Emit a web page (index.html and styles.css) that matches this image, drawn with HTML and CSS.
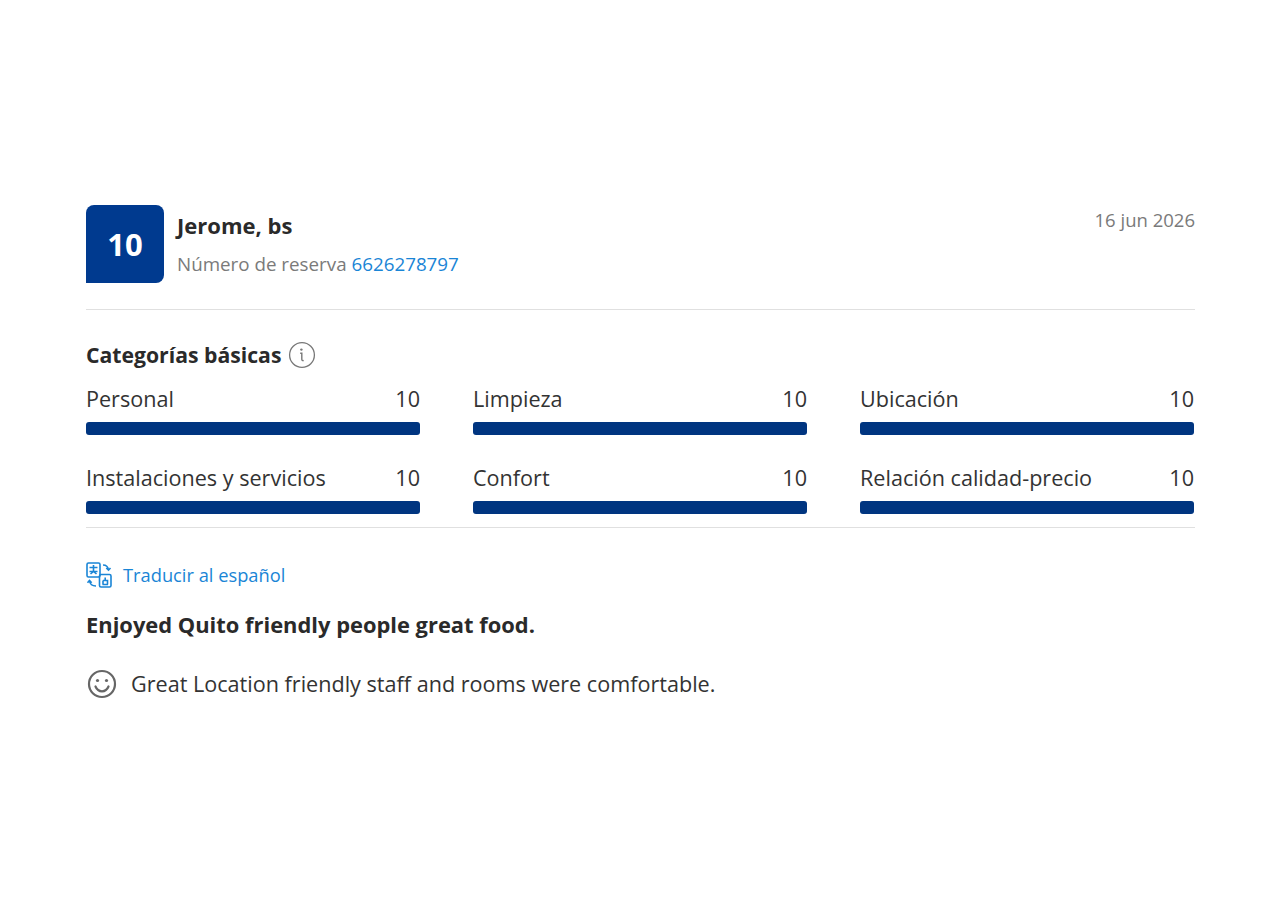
FILE: index.html

```html
<!DOCTYPE html>
<html lang="es">
<head>
  <meta charset="UTF-8">
  <title>Comentario</title>
  <link rel="stylesheet" href="styles.css">
</head>
<body>
  <div class="review">
    <div class="head">
      <div class="score">10</div>
      <div class="who">
        <div class="name">Jerome, bs</div>
        <div class="booking">Número de reserva <a href="#">6626278797</a></div>
      </div>
      <div class="date">16 jun 2026</div>
    </div>

    <div class="cats">
      <h3>Categorías básicas
        <svg class="info" width="28" height="28" viewBox="0 0 28 28" fill="none">
          <circle cx="14" cy="14" r="12.4" stroke="#777" stroke-width="1.3"/>
          <circle cx="13.4" cy="8.6" r="1.2" fill="#777"/>
          <path d="M12.200 12.200h1.600v6c0 1.100.7 1.600 1.900 1.300" stroke="#777" stroke-width="1.400"/>
        </svg>
      </h3>
      <div class="grid">
        <div class="cat"><div class="row"><span>Personal</span><span>10</span></div><div class="bar"></div></div>
        <div class="cat"><div class="row"><span>Limpieza</span><span>10</span></div><div class="bar"></div></div>
        <div class="cat"><div class="row"><span>Ubicación</span><span>10</span></div><div class="bar"></div></div>
        <div class="cat"><div class="row"><span>Instalaciones y servicios</span><span>10</span></div><div class="bar"></div></div>
        <div class="cat"><div class="row"><span>Confort</span><span>10</span></div><div class="bar"></div></div>
        <div class="cat"><div class="row"><span>Relación calidad-precio</span><span>10</span></div><div class="bar"></div></div>
      </div>
    </div>

    <a class="translate" href="#">
      <svg width="26" height="26" viewBox="0 0 26 26" fill="none" stroke="#1a85d6" stroke-width="1.600">
        <rect x="1" y="1" width="13" height="14" rx="1.500"/>
        <path d="M3.500 5.500h8M7.500 3v6.500M3.500 9.500h8M7.500 9.500l-3 2.500M7.500 9.500l3 2.500"/>
        <rect x="13.500" y="12.500" width="11.500" height="12.500" rx="1.500"/>
        <path d="M16.500 22.500h5.500M17 18.500h4.500v4M17 18.500v4M19.200 15.500v3"/>
        <path d="M17 3c3 0 5 1.500 5.500 5M20.300 6l2.200 2.200L24.500 6M10 24c-3.500 0-6-1.500-6.500-5M5.700 20.700l-2.200-2.200-2 2.200"/>
      </svg>
      <span>Traducir al español</span>
    </a>

    <div class="title">Enjoyed Quito friendly people great food.</div>

    <div class="comment">
      <svg width="32" height="32" viewBox="0 0 32 32" fill="none" stroke="#666" stroke-width="2.200">
        <circle cx="16" cy="16" r="13"/>
        <path d="M9.500 18.500c1.300 3.200 3.700 4.800 6.500 4.800s5.200-1.600 6.500-4.800" stroke-linecap="round"/>
        <circle cx="11.500" cy="12.500" r="1.600" fill="#666" stroke="none"/>
        <circle cx="20.500" cy="12.500" r="1.600" fill="#666" stroke="none"/>
      </svg>
      <span>Great Location friendly staff and rooms were comfortable.</span>
    </div>
  </div>
</body>
</html>
```

FILE: styles.css

```css
body {
  margin: 0;
  background: #fff;
  color: #2a2a2a;
  font-family: "Open Sans", "Noto Sans", sans-serif;
}
a {
  color: #1a85d6;
  text-decoration: none;
}
.review {
  width: 1109px;
  margin-left: 86px;
  padding-top: 205px;
}
.head {
  display: flex;
  padding-bottom: 26px;
  border-bottom: 1px solid #e0e0e0;
}
.score {
  width: 78px;
  height: 78px;
  background: #003a8f;
  color: #fff;
  border-radius: 8px 8px 8px 0;
  font-size: 31px;
  font-weight: 700;
  display: flex;
  align-items: center;
  justify-content: center;
}
.who {
  margin-left: 13px;
  flex: 1;
}
.name {
  font-size: 22px;
  font-weight: 700;
  line-height: 28px;
  margin-top: 6px;
}
.booking {
  font-size: 18.800px;
  line-height: 28px;
  margin-top: 11px;
  color: #7a7a7a;
}
.date {
  font-size: 18.500px;
  line-height: 28px;
  margin-top: 1px;
  color: #7a7a7a;
}
.cats {
  padding: 30px 0 13px;
  border-bottom: 1px solid #e0e0e0;
}
h3 {
  margin: 0;
  display: flex;
  align-items: center;
  gap: 7px;
  font-size: 21.200px;
  font-weight: 700;
  line-height: 30px;
}
.grid {
  display: grid;
  grid-template-columns: repeat(3, 334px);
  column-gap: 53px;
  row-gap: 28px;
  margin-top: 14px;
}
.row {
  display: flex;
  justify-content: space-between;
  font-size: 21.600px;
  line-height: 30px;
  color: #333;
}
.bar {
  height: 13px;
  margin-top: 8px;
  background: #003580;
  border-radius: 3px;
}
.translate {
  display: flex;
  align-items: center;
  gap: 11px;
  margin-top: 34px;
  font-size: 18.300px;
  line-height: 26px;
}
.title {
  margin-top: 22px;
  font-size: 21.900px;
  font-weight: 700;
  line-height: 30px;
}
.comment {
  display: flex;
  align-items: center;
  gap: 13px;
  margin-top: 28px;
  font-size: 21.600px;
  line-height: 32px;
  color: #333;
}
```
